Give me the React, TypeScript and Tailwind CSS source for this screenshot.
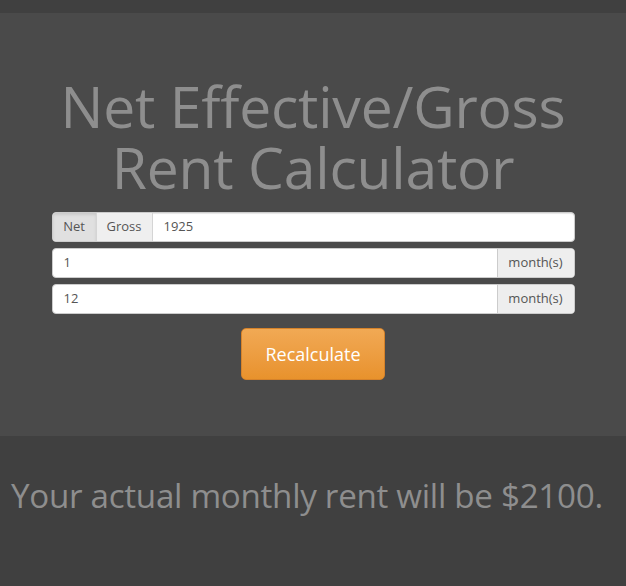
import React from "react";

export default function App() {
  const font = { fontFamily: '"Open Sans", "Noto Sans", sans-serif' };
  return (
    <div className="w-[626px] h-[586px] bg-[#404040] flex flex-col" style={font}>
      <div className="h-[13px] bg-[#404040]" />
      <div className="bg-[#4a4a4a] h-[423px] flex flex-col items-center pt-[63px]">
        <h1 className="text-[57px] leading-[61px] text-[#8e8e8e] text-center font-normal tracking-[-0.2px]">
          Net Effective/Gross
          <br />
          Rent Calculator
        </h1>
        <div className="w-[523px] mt-[14px] flex flex-col gap-[6px]">
          <div className="flex h-[30px] rounded-[4px] bg-white overflow-hidden shadow-[inset_0_1px_1px_rgba(0,0,0,0.1)] border border-[#ccc]">
            <button className="w-[44px] bg-[#e0e0e0] text-[13px] text-[#555] border-r border-[#d5d5d5] shadow-[inset_0_2px_3px_rgba(0,0,0,0.1)]">Net</button>
            <button className="w-[56px] bg-[#efefef] text-[13px] text-[#555] border-r border-[#d5d5d5]">Gross</button>
            <div className="flex-1 flex items-center pl-[11px] text-[13px] text-[#555]">1925</div>
          </div>
          <div className="flex h-[30px] rounded-[4px] bg-white overflow-hidden border border-[#ccc]">
            <div className="flex-1 flex items-center pl-[11px] text-[13px] text-[#555]">1</div>
            <div className="w-[77px] flex items-center justify-center bg-[#eee] border-l border-[#ccc] text-[13px] text-[#555]">month(s)</div>
          </div>
          <div className="flex h-[30px] rounded-[4px] bg-white overflow-hidden border border-[#ccc]">
            <div className="flex-1 flex items-center pl-[11px] text-[13px] text-[#555]">12</div>
            <div className="w-[77px] flex items-center justify-center bg-[#eee] border-l border-[#ccc] text-[13px] text-[#555]">month(s)</div>
          </div>
        </div>
        <button className="mt-[14px] w-[144px] h-[52px] rounded-[5px] bg-gradient-to-b from-[#f1a954] to-[#e8922c] border border-[#d5822a] text-white text-[18px]">
          Recalculate
        </button>
      </div>
      <div className="flex-1 flex items-start justify-start pl-[11px] pt-[35px]">
        <p className="text-[33.2px] text-[#8e8e8e] tracking-[-0.3px]">Your actual monthly rent will be $2100.</p>
      </div>
    </div>
  );
}
